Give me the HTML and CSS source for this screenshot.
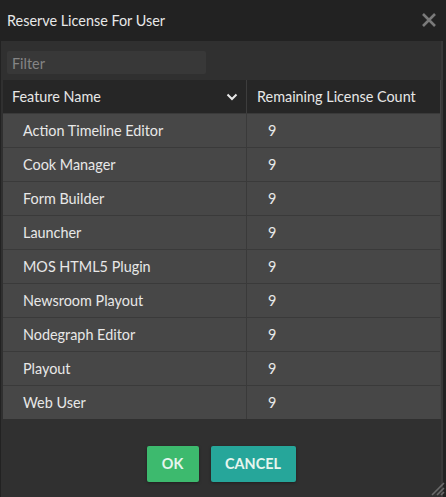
FILE: index.html
```html
<!DOCTYPE html>
<html>
<head>
<meta charset="utf-8">
<link rel="stylesheet" href="styles.css">
</head>
<body>
<div class="dialog">
  <div class="titlebar">
    <span class="title">Reserve License For User</span>
    <svg class="close" width="16" height="16" viewBox="0 0 16 16"><path d="M2 2 L14 14 M14 2 L2 14" stroke="#7a7a7a" stroke-width="2.6" stroke-linecap="butt"/></svg>
  </div>
  <div class="body">
    <div class="content">
      <div class="filter">Filter</div>
      <div class="table">
        <div class="thead">
          <div class="th th-name"><span>Feature Name</span>
            <svg class="chev" width="12" height="8" viewBox="0 0 12 8"><path d="M1.5 1.5 L6 6 L10.5 1.5" fill="none" stroke="#e8e8e8" stroke-width="2"/></svg>
          </div>
          <div class="th th-count">Remaining License Count</div>
        </div>
        <div class="row"><div class="td name">Action Timeline Editor</div><div class="td count">9</div></div>
        <div class="row"><div class="td name">Cook Manager</div><div class="td count">9</div></div>
        <div class="row"><div class="td name">Form Builder</div><div class="td count">9</div></div>
        <div class="row"><div class="td name">Launcher</div><div class="td count">9</div></div>
        <div class="row"><div class="td name">MOS HTML5 Plugin</div><div class="td count">9</div></div>
        <div class="row"><div class="td name">Newsroom Playout</div><div class="td count">9</div></div>
        <div class="row"><div class="td name">Nodegraph Editor</div><div class="td count">9</div></div>
        <div class="row"><div class="td name">Playout</div><div class="td count">9</div></div>
        <div class="row"><div class="td name">Web User</div><div class="td count">9</div></div>
      </div>
      <div class="actions">
        <button class="btn ok">OK</button>
        <button class="btn cancel">CANCEL</button>
      </div>
    </div>
    <div class="scrolltrack"></div>
    <svg class="grip" width="16" height="16" viewBox="0 0 16 16"><path d="M15 3 L3 15 M15 8 L8 15 M15 12 L12 15" stroke="#6a6a6a" stroke-width="1.6"/></svg>
  </div>
</div>
</body>
</html>
```
FILE: styles.css
```css
html, body {
  margin: 0;
  padding: 0;
  background: #222222;
}
body {
  font-family: Lato, "Open Sans", sans-serif;
  font-size: 14.4px;
  color: #e6e6e6;
}
.dialog {
  width: 446px;
  height: 497px;
  display: flex;
  flex-direction: column;
  background: #222222;
  overflow: hidden;
}
.titlebar {
  height: 41px;
  display: flex;
  align-items: center;
  justify-content: space-between;
  padding: 0 9px 0 7px;
  box-sizing: border-box;
  flex: none;
}
.title {
  font-size: 14.4px;
  color: #e8e8e8;
  padding-bottom: 1px;
}
.close {
  margin-top: -2px;
}
.body {
  flex: 1;
  display: flex;
  margin-left: 1px;
  position: relative;
}
.content {
  width: 440px;
  background: #303030;
  display: flex;
  flex-direction: column;
  padding: 10px 0 0 2px;
  box-sizing: border-box;
}
.scrolltrack {
  width: 2px;
  background: #383838;
}
.filter {
  width: 199px;
  height: 23px;
  margin-left: 4px;
  background: #383838;
  color: #858585;
  font-size: 14.4px;
  line-height: 23px;
  padding: 1px 0 0 5px;
  box-sizing: border-box;
  border-radius: 2px;
}
.table {
  margin-top: 6px;
  width: 438px;
  border-right: 1px solid #444;
  box-sizing: border-box;
}
.thead {
  display: flex;
  height: 33px;
  background: #262626;
}
.th {
  display: flex;
  align-items: center;
  font-size: 14.4px;
  color: #e6e6e6;
  padding-bottom: 1px;
  box-sizing: border-box;
}
.th-name {
  width: 244px;
  padding-left: 9px;
  padding-right: 8px;
  justify-content: space-between;
  border-right: 1px solid #3d3d3d;
}
.th-name .chev {
  margin-top: 1px;
}
.th-count {
  padding-left: 10px;
}
.row {
  display: flex;
  height: 34px;
  background: #474747;
  border-top: 1px solid #3a3a3a;
  box-sizing: border-box;
}
.row:first-of-type {
  border-top: none;
}
.td {
  display: flex;
  align-items: center;
  font-size: 14.4px;
  color: #e8e8e8;
  padding-bottom: 1px;
  box-sizing: border-box;
}
.name {
  width: 244px;
  padding-left: 20px;
  border-right: 1px solid #3a3a3a;
}
.count {
  padding-left: 21px;
}
.actions {
  display: flex;
  justify-content: center;
  gap: 12px;
  margin-top: 27px;
  padding-right: 2px;
}
.btn {
  height: 36px;
  border: none;
  border-radius: 2px;
  font-family: Lato, "Open Sans", sans-serif;
  font-size: 14.4px;
  font-weight: 700;
  color: #e6f5ee;
  padding: 0 0 1px 0;
  box-shadow: 0 1px 3px rgba(0,0,0,0.35);
}
.ok {
  width: 52px;
  background: #3dba6e;
}
.cancel {
  width: 85px;
  background: #26a69a;
}
.grip {
  position: absolute;
  right: 1px;
  bottom: 1px;
}
```
